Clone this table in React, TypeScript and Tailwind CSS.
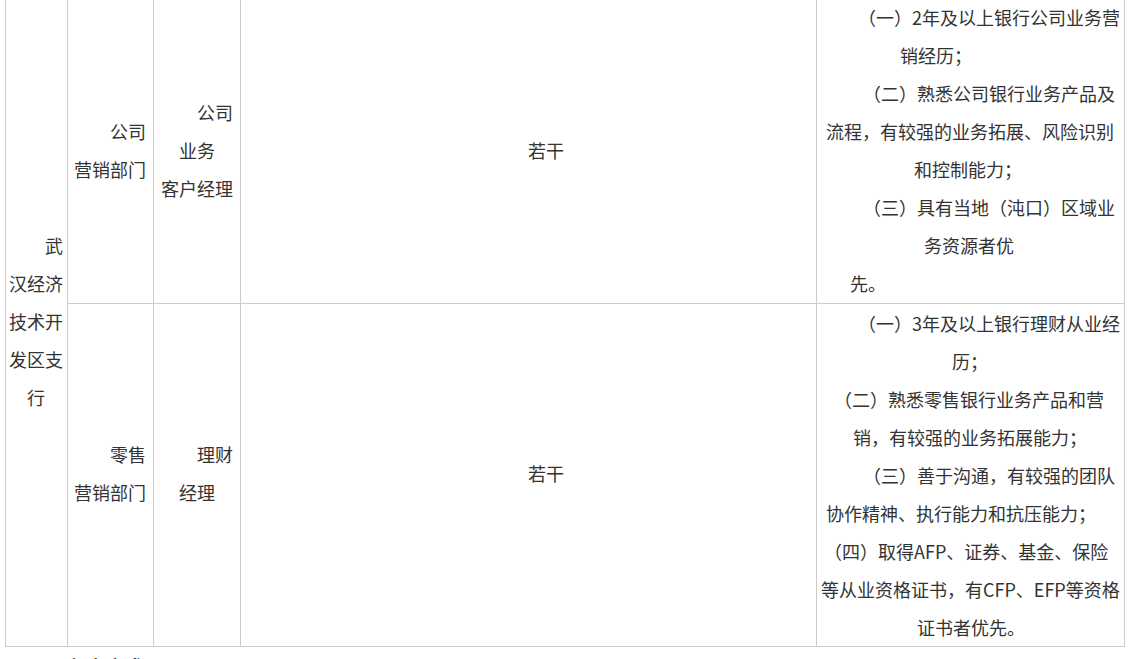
type Line = { pl: string; text: string }

// each cell keeps the original's odd manual line breaks, so lines are placed one by one
const branch: Line[] = [
  { pl: "pl-[39px]", text: "武" },
  { pl: "pl-[3px]", text: "汉经济" },
  { pl: "pl-[3px]", text: "技术开" },
  { pl: "pl-[3px]", text: "发区支" },
  { pl: "pl-[21px]", text: "行" },
]

const rows = [
  {
    dept: [
      { pl: "pl-[42px]", text: "公司" },
      { pl: "pl-[6px]", text: "营销部门" },
    ],
    post: [
      { pl: "pl-[43px]", text: "公司" },
      { pl: "pl-[25px]", text: "业务" },
      { pl: "pl-[7px]", text: "客户经理" },
    ],
    pad: "-mt-[2px]",
    reqs: [
      { pl: "pl-[41px]", text: "（一）2年及以上银行公司业务营" },
      { pl: "pl-[83px]", text: "销经历；" },
      { pl: "pl-[46px]", text: "（二）熟悉公司银行业务产品及" },
      { pl: "pl-[9px]", text: "流程，有较强的业务拓展、风险识别" },
      { pl: "pl-[97px]", text: "和控制能力；" },
      { pl: "pl-[46px]", text: "（三）具有当地（沌口）区域业" },
      { pl: "pl-[107px]", text: "务资源者优" },
      { pl: "pl-[33px]", text: "先。" },
    ],
  },
  {
    dept: [
      { pl: "pl-[42px]", text: "零售" },
      { pl: "pl-[6px]", text: "营销部门" },
    ],
    post: [
      { pl: "pl-[43px]", text: "理财" },
      { pl: "pl-[25px]", text: "经理" },
    ],
    pad: "mt-0",
    reqs: [
      { pl: "pl-[41px]", text: "（一）3年及以上银行理财从业经" },
      { pl: "pl-[135px]", text: "历；" },
      { pl: "pl-[17px]", text: "（二）熟悉零售银行业务产品和营" },
      { pl: "pl-[36px]", text: "销，有较强的业务拓展能力；" },
      { pl: "pl-[46px]", text: "（三）善于沟通，有较强的团队" },
      { pl: "pl-[9px]", text: "协作精神、执行能力和抗压能力；" },
      { pl: "pl-[7px]", text: "（四）取得AFP、证券、基金、保险" },
      { pl: "pl-[4px]", text: "等从业资格证书，有CFP、EFP等资格" },
      { pl: "pl-[100px]", text: "证书者优先。" },
    ],
  },
]

function Lines({ lines, className }: { lines: Line[]; className?: string }) {
  return (
    <div className={className}>
      {lines.map((l, i) => (
        <div key={i} className={`${l.pl} whitespace-nowrap`}>
          {l.text}
        </div>
      ))}
    </div>
  )
}

const cell = "border-r border-b border-[#cccccc] overflow-hidden"
// noto sits a touch lower than the original font, so centred cells get a little extra bottom padding
const mid = `${cell} flex flex-col justify-center pb-[4px]`

export default function App() {
  return (
    <div className="h-[659px] w-[1131px] overflow-hidden bg-white pl-[5px] font-['Noto_Sans_CJK_SC',sans-serif] text-[18px] leading-[38px] text-[#333333]">
      <div className="grid grid-cols-[62px_86px_87px_576px_308px] grid-rows-[304px_343px] border-l border-[#cccccc] w-[1120px]">
        <div className={`${mid} row-span-2`}>
          <Lines lines={branch} />
        </div>
        {rows.map((r, i) => (
          <div key={i} className="contents">
            <div className={mid}>
              <Lines lines={r.dept} />
            </div>
            <div className={mid}>
              <Lines lines={r.post} />
            </div>
            <div className={mid}>
              <Lines lines={[{ pl: "pl-[287px]", text: "若干" }]} />
            </div>
            <div className={cell}>
              <Lines lines={r.reqs} className={r.pad} />
            </div>
          </div>
        ))}
      </div>
      <p className="pl-[65px] font-bold">报名方式</p>
    </div>
  )
}
